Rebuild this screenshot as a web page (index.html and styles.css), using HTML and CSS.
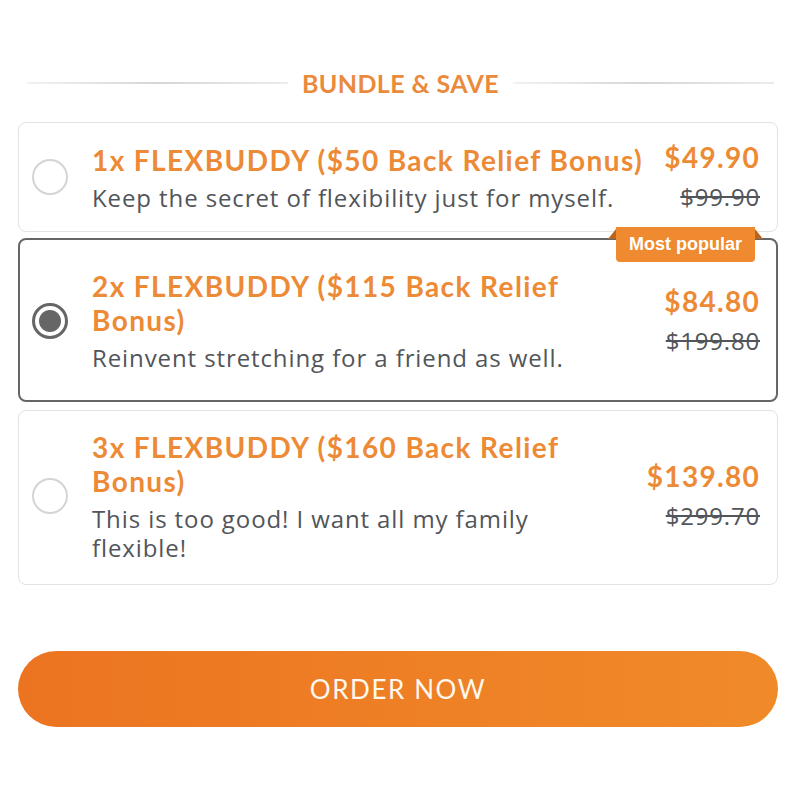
FILE: index.html
```html
<!DOCTYPE html>
<html lang="en">
<head>
    <meta charset="UTF-8">
    <title>Bundle &amp; Save</title>
    <link rel="stylesheet" href="styles.css">
</head>
<body>
    <div class="bundle">
        <div class="bundle-heading">
            <span class="line"></span>
            <h2>BUNDLE &amp; SAVE</h2>
            <span class="line"></span>
        </div>

        <label class="offer">
            <span class="radio"></span>
            <div class="offer-text">
                <div class="offer-title">1x FLEXBUDDY ($50 Back Relief Bonus)</div>
                <div class="offer-desc">Keep the secret of flexibility just for myself.</div>
            </div>
            <div class="offer-price">
                <div class="price-now">$49.90</div>
                <div class="price-old">$99.90</div>
            </div>
        </label>

        <label class="offer offer-selected">
            <span class="badge">Most popular</span>
            <span class="radio radio-on"></span>
            <div class="offer-text">
                <div class="offer-title">2x FLEXBUDDY ($115 Back Relief Bonus)</div>
                <div class="offer-desc">Reinvent stretching for a friend as well.</div>
            </div>
            <div class="offer-price">
                <div class="price-now">$84.80</div>
                <div class="price-old">$199.80</div>
            </div>
        </label>

        <label class="offer offer-last">
            <span class="radio"></span>
            <div class="offer-text">
                <div class="offer-title">3x FLEXBUDDY ($160 Back Relief Bonus)</div>
                <div class="offer-desc">This is too good! I want all my family flexible!</div>
            </div>
            <div class="offer-price">
                <div class="price-now">$139.80</div>
                <div class="price-old">$299.70</div>
            </div>
        </label>

        <button class="order-button">ORDER NOW</button>
    </div>
</body>
</html>
```

FILE: styles.css
```css
body {
    margin: 0;
    background: #fff;
    font-family: "Open Sans", Arial, sans-serif;
}
.bundle {
    padding: 66px 22px 0 18px;
}
.bundle-heading {
    display: flex;
    align-items: center;
    gap: 14px;
    padding: 0 4px 0 9px;
    height: 34px;
    margin-bottom: 22px;
}
.bundle-heading h2 {
    margin: 0;
    font-family: "Lato", sans-serif;
    font-size: 25px;
    font-weight: 700;
    color: #ea8a3c;
    letter-spacing: 0.4px;
}
.bundle-heading .line {
    flex: 1;
    height: 2px;
    background: linear-gradient(90deg, #f2f2f2, #d6d6d6 50%, #ececec);
}
.offer {
    position: relative;
    display: flex;
    align-items: center;
    border: 1px solid #e3e3e3;
    border-radius: 8px;
    padding: 15px 17px 15px 13px;
    margin-bottom: 6px;
}
.offer-selected {
    border: 2px solid #666;
    padding: 29px 16px 28px 12px;
    margin-bottom: 8px;
}
.offer-last {
    padding: 19px 17px 22px 13px;
}
.radio {
    flex: none;
    box-sizing: border-box;
    width: 36px;
    height: 36px;
    border: 2px solid #d4d4d4;
    border-radius: 50%;
    margin-right: 24px;
}
.radio-on {
    border: 3px solid #666;
    background: radial-gradient(circle, #666 0 10.5px, #fff 11.5px);
}
.offer-text {
    flex: 1;
    min-width: 0;
}
.offer-title {
    font-family: "Lato", sans-serif;
    font-weight: 700;
    font-size: 28px;
    line-height: 34px;
    letter-spacing: 1.4px;
    color: #ec8a36;
}
.offer-desc {
    margin-top: 6px;
    font-size: 24px;
    line-height: 29px;
    letter-spacing: 0.9px;
    color: #52555a;
}
.offer-price {
    flex: none;
    text-align: right;
    margin-left: 20px;
}
.price-now {
    font-family: "Lato", sans-serif;
    font-weight: 700;
    font-size: 28px;
    line-height: 38px;
    letter-spacing: 1.3px;
    color: #ec8a36;
}
.price-old {
    margin-top: 2px;
    font-size: 24px;
    line-height: 38px;
    letter-spacing: 0.8px;
    color: #52555a;
    text-decoration: line-through;
}
.badge {
    position: absolute;
    top: -13px;
    right: 21px;
    background: #ef8a30;
    color: #fff;
    font-family: "Liberation Sans", Arial, sans-serif;
    font-weight: 700;
    font-size: 18px;
    line-height: 35px;
    padding: 0 13px;
    border-radius: 0 0 4px 4px;
}
.badge::before,
.badge::after {
    content: "";
    position: absolute;
    top: 2px;
    border-bottom: 10px solid #b8651f;
}
.badge::before {
    left: -8px;
    border-left: 8px solid transparent;
}
.badge::after {
    right: -8px;
    border-right: 8px solid transparent;
}
.order-button {
    display: block;
    width: 100%;
    height: 76px;
    margin-top: 66px;
    border: none;
    border-radius: 38px;
    background: linear-gradient(90deg, #ec7421, #f08a29);
    color: #fff8ee;
    font-family: "Lato", sans-serif;
    font-weight: 400;
    font-size: 26px;
    letter-spacing: 1.6px;
}
```
